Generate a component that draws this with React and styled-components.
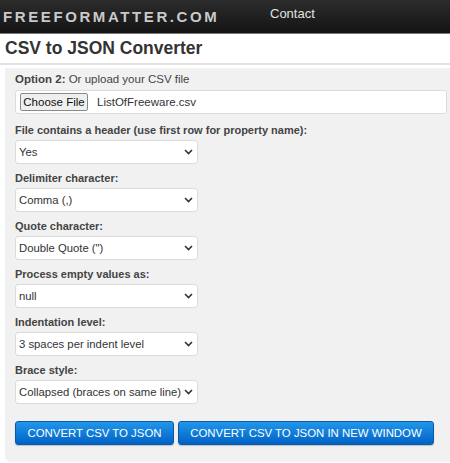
import React from 'react';
import styled, { createGlobalStyle } from 'styled-components';

const GlobalStyle = createGlobalStyle`
    body {
        margin: 0;
        background: #fff;
        font-family: "Liberation Sans", Arial, sans-serif;
    }
`;

const TopBar = styled.div`
    height: 33px;
    display: flex;
    align-items: center;
    background: linear-gradient(#2c2c2c, #141414);
    border-bottom: 1px solid #777;
`;

const Logo = styled.div`
    padding-left: 3px;
    width: 267px;
    font-size: 15px;
    font-weight: bold;
    letter-spacing: 2.6px;
    color: #c9c9c9;
`;

const NavLink = styled.a`
    font-size: 13px;
    color: #e2e2e2;
    margin-top: -6px;
`;

const TitleBar = styled.div`
    height: 29px;
    display: flex;
    align-items: center;
    padding-left: 5px;
    border-bottom: 2px solid #e3e3e3;
`;

const Title = styled.h1`
    margin: 0;
    font-size: 17.5px;
    font-weight: bold;
    color: #333;
`;

const Panel = styled.div`
    margin: 3px 0 0 5px;
    padding: 3px 3px 17px 10px;
    background: #f1f1f1;
    border-bottom-left-radius: 6px;
`;

const Group = styled.div`
    margin-bottom: ${p => p.$gap}px;
`;

const Label = styled.div`
    font-size: ${p => p.$plain ? '11.5px' : '11px'};
    line-height: 16px;
    color: #444;
    font-weight: ${p => p.$plain ? 'normal' : 'bold'};
    margin-bottom: 2px;

    b {
        font-weight: bold;
    }
`;

const FileBox = styled.div`
    height: 24px;
    box-sizing: border-box;
    display: flex;
    align-items: center;
    gap: 9px;
    padding-left: 4px;
    background: #fff;
    border: 1px solid #dcdcdc;
    border-radius: 3px;
    margin-top: 3px;
`;

const FileButton = styled.button`
    height: 18px;
    width: 68px;
    padding: 0;
    font-family: inherit;
    font-size: 11.5px;
    color: #111;
    background: #efefef;
    border: 1px solid #8a8a8a;
    border-radius: 2px;
`;

const FileName = styled.span`
    font-size: 11.5px;
    color: #333;
`;

const SelectWrap = styled.div`
    position: relative;
    width: 183px;
    height: 24px;
`;

const Select = styled.select`
    appearance: none;
    width: 100%;
    height: 100%;
    box-sizing: border-box;
    padding: 0 0 0 3px;
    font-family: inherit;
    font-size: 11.3px;
    color: #333;
    background: #fff;
    border: 1px solid #dcdcdc;
    border-radius: 3px;
    outline: none;
`;

const Chevron = styled.svg`
    position: absolute;
    right: 5px;
    top: 9px;
    pointer-events: none;
`;

const Actions = styled.div`
    display: flex;
    gap: 4px;
`;

const Button = styled.button`
    flex-shrink: 0;
    height: 24px;
    width: ${p => p.$w}px;
    padding: 0;
    white-space: nowrap;
    font-family: inherit;
    font-size: 11.4px;
    color: #fff;
    background: linear-gradient(#2196ea, #0063c6);
    border: 1px solid #0a5aa8;
    border-radius: 3px;
    box-shadow: 0 1px 1px rgba(0, 0, 0, 0.2);
`;

const fields = [
    { label: 'File contains a header (use first row for property name):', value: 'Yes' },
    { label: 'Delimiter character:', value: 'Comma (,)' },
    { label: 'Quote character:', value: 'Double Quote (")' },
    { label: 'Process empty values as:', value: 'null' },
    { label: 'Indentation level:', value: '3 spaces per indent level' },
    { label: 'Brace style:', value: 'Collapsed (braces on same line)' },
];

const App = () => {
    return (
        <>
            <GlobalStyle />
            <TopBar>
                <Logo>FREEFORMATTER.COM</Logo>
                <NavLink>Contact</NavLink>
            </TopBar>
            <TitleBar>
                <Title>CSV to JSON Converter</Title>
            </TitleBar>
            <Panel>
                <Group $gap={8}>
                    <Label $plain><b>Option 2:</b> Or upload your CSV file</Label>
                    <FileBox>
                        <FileButton type="button">Choose File</FileButton>
                        <FileName>ListOfFreeware.csv</FileName>
                    </FileBox>
                </Group>

                {fields.map((f, i) => (
                    <Group key={f.label} $gap={i === fields.length - 1 ? 17 : 6}>
                        <Label>{f.label}</Label>
                        <SelectWrap>
                            <Select defaultValue={f.value}>
                                <option>{f.value}</option>
                            </Select>
                            <Chevron width="9" height="6" viewBox="0 0 9 6">
                                <path d="M1 1 L4.5 4.5 L8 1" fill="none" stroke="#333" strokeWidth="1.6" />
                            </Chevron>
                        </SelectWrap>
                    </Group>
                ))}

                <Actions>
                    <Button type="button" $w={159}>CONVERT CSV TO JSON</Button>
                    <Button type="button" $w={256}>CONVERT CSV TO JSON IN NEW WINDOW</Button>
                </Actions>
            </Panel>
        </>
    );
};

export default App;
